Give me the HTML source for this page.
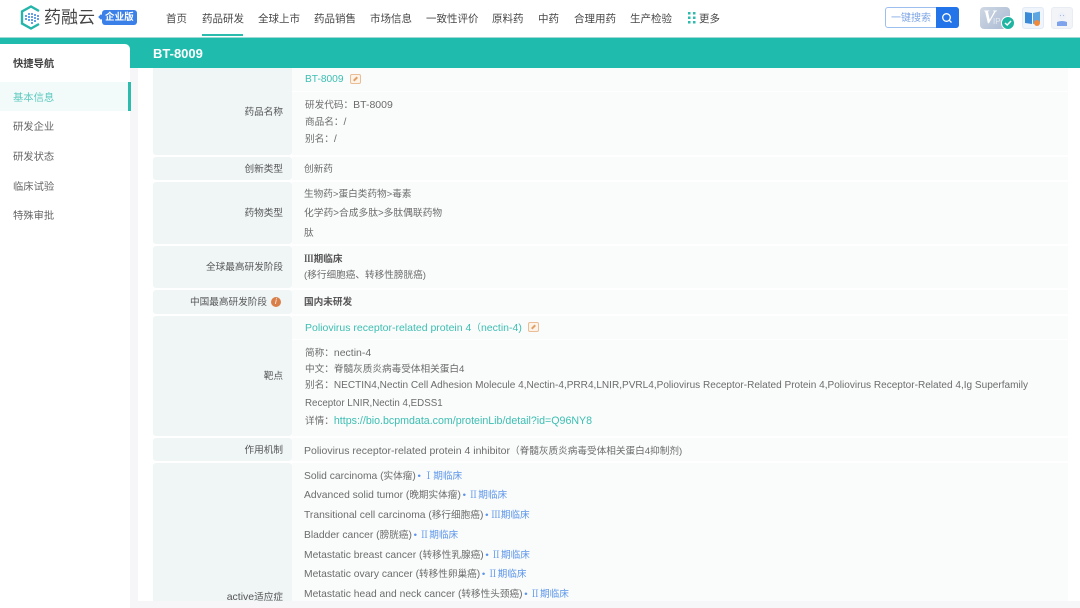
<!DOCTYPE html>
<html lang="zh"><head><meta charset="utf-8"><title>BT-8009</title>
<style>
html,body{margin:0;padding:0}
body{width:1080px;height:608px;overflow:hidden;position:relative;background:#fff;font-family:"Liberation Sans","Noto Sans CJK SC",sans-serif;font-size:9.65px;color:#6c6c6c}
#w{position:absolute;inset:0;filter:blur(.3px)}
.a,.t{position:absolute}
.t{white-space:nowrap;line-height:14px}
u{text-decoration:none;font-size:10.5px}
.m u{font-size:10.3px}
.n{font-size:10.5px;color:#484848;top:12px}
.s{font-size:10.3px;color:#666;left:13px}
.l{right:797px;text-align:right;color:#555}
.b{font-weight:bold;color:#555}
.g{color:#3cbfb2}
.p{color:#5b95ea;margin-left:-1px}
em{font-style:normal;font-family:"Noto Serif CJK SC",serif}
.e{width:11px;height:10px;border:1px solid #e9bd95;border-radius:2px;background:#fdf3e8;box-sizing:border-box}
.e:after{content:"";position:absolute;left:2px;top:3px;width:5px;height:2px;background:#e0a068;transform:rotate(-45deg)}
</style></head><body><div id="w">
<div class="a" style="left:0;top:0;width:1080px;height:37px;background:#fff"></div>
<svg class="a" style="left:19px;top:4px" width="26" height="28" viewBox="0 0 26 28"><path d="M20 7 L12 2.500 L3 7.500 V19.500 L12 24.500 L20 20" fill="none" stroke="#25b5aa" stroke-width="2.400"/><path d="M7 11v6M10 9v9M13 9v11M16 10v8M19 11v5" stroke="#4a8fe0" stroke-width="1.700" stroke-dasharray="2 1"/></svg>
<div class="t" style="left:44px;top:5px;font-size:17px;line-height:26px;color:#444">药融云</div>
<div class="a" style="left:102px;top:10px;width:35px;height:15px;background:#3b80e8;border-radius:3px"></div>
<div class="a" style="left:99px;top:15px;width:4px;height:4px;background:#3b80e8;transform:rotate(45deg)"></div>
<div class="t" style="left:105px;top:11px;font-size:9.6px;color:#fff;font-weight:bold">企业版</div>
<div class="t n" style="left:166px">首页</div>
<div class="t n" style="left:202px">药品研发</div>
<div class="t n" style="left:258px">全球上市</div>
<div class="t n" style="left:314px">药品销售</div>
<div class="t n" style="left:370px">市场信息</div>
<div class="t n" style="left:426px">一致性评价</div>
<div class="t n" style="left:492px">原料药</div>
<div class="t n" style="left:538px">中药</div>
<div class="t n" style="left:574px">合理用药</div>
<div class="t n" style="left:630px">生产检验</div>
<svg class="a" style="left:687px;top:11px" width="10" height="14"><g fill="#2bbcae"><rect x="1" y="1" width="2.500" height="2.500"/><rect x="6" y="1" width="2.500" height="2.500"/><rect x="1" y="5.500" width="2.500" height="2.500"/><rect x="6" y="5.500" width="2.500" height="2.500"/><rect x="1" y="10" width="2.500" height="2.500"/><rect x="6" y="10" width="2.500" height="2.500"/></g></svg>
<div class="t n" style="left:699px">更多</div>
<div class="a" style="left:202px;top:34px;width:41px;height:2px;background:#2bbcae"></div>
<div class="a" style="left:885px;top:7px;width:74px;height:21px;border:1px solid #9dbff0;border-radius:3px;box-sizing:border-box;background:#fff"></div>
<div class="t" style="left:891px;top:12px;font-size:10px;color:#7ea6e6">一键搜索</div>
<div class="a" style="left:936px;top:7px;width:23px;height:21px;background:#2274e8;border-radius:0 3px 3px 0"></div>
<svg class="a" style="left:940px;top:11px" width="14" height="14" fill="none" stroke="#fff" stroke-width="1.300"><circle cx="6.500" cy="6.500" r="3.800"/><path d="M9.300 9.300 L11.500 11.500"/></svg>
<div class="a" style="left:980px;top:7px;width:30px;height:22px;background:linear-gradient(135deg,#cfd8e4,#a9b9d2);border-radius:4px"></div>
<div class="t" style="left:983px;top:7px;font:italic bold 19px/22px 'Liberation Serif',serif;color:#fff">V</div>
<div class="t" style="left:993px;top:15px;font-size:8px;color:#e4eaf2">IP</div>
<div class="a" style="left:1001px;top:16px;width:14px;height:14px;background:#1fb5a3;border-radius:50%;border:1px solid #fff;box-sizing:border-box"></div>
<svg class="a" style="left:1002px;top:17px" width="12" height="12" fill="none" stroke="#fff" stroke-width="1.500"><path d="M3 6 L5.200 8 L9 4"/></svg>
<div class="a" style="left:1022px;top:7px;width:22px;height:22px;background:#f0f5fc;border:1px solid #e2eaf5;border-radius:3px;box-sizing:border-box"></div>
<svg class="a" style="left:1024px;top:10px" width="18" height="17"><path d="M1 2 L8 3 V14 L1 13 Z" fill="#3b8ad8"/><path d="M9 3 L16 1.500 V12 L9 14 Z" fill="#5ea6e2"/><circle cx="13" cy="13" r="3" fill="#ee8a3a"/></svg>
<div class="a" style="left:1051px;top:7px;width:22px;height:22px;background:#f2f4f8;border:1px solid #e9edf3;border-radius:3px;box-sizing:border-box"></div>
<svg class="a" style="left:1054px;top:10px" width="16" height="17"><circle cx="8" cy="6" r="4" fill="#eef1f8"/><circle cx="6.500" cy="5.500" r=".6" fill="#a9bbdc"/><circle cx="9.500" cy="5.500" r=".6" fill="#a9bbdc"/><path d="M3 12 Q8 10 13 12 V16 H3 Z" fill="#7ea3ec"/></svg>

<div class="a" style="left:0;top:37px;width:1080px;height:31px;background:#1fbcad;border-top:1px solid #9fd9d3;box-sizing:border-box"></div>
<div class="t" style="left:153px;top:47px;font-size:13px;font-weight:bold;color:#fff">BT-8009</div>
<div class="a" style="left:130px;top:68px;width:8px;height:540px;background:#f6f6f8"></div>
<div class="a" style="left:0;top:44px;width:130px;height:564px;background:#fff;border-radius:0 5px 0 0"></div>
<div class="t s" style="top:58px;font-weight:bold;color:#444">快捷导航</div>
<div class="a" style="left:0;top:82px;width:131px;height:29px;background:#f3fbfa"></div>
<div class="a" style="left:128px;top:82px;width:3px;height:29px;background:#2bbcae"></div>
<div class="t s" style="top:92px;color:#5cc9be">基本信息</div>
<div class="t s" style="top:121px">研发企业</div>
<div class="t s" style="top:151px">研发状态</div>
<div class="t s" style="top:181px">临床试验</div>
<div class="t s" style="top:210px">特殊审批</div>

<div class="a" style="left:153px;top:68px;width:139px;height:87px;background:#f0f6f6;border-radius:0 0 3px 3px"></div><div class="a" style="left:292px;top:68px;width:776px;height:87px;background:#fafbfb"></div>
<div class="a" style="left:292px;top:91px;width:776px;height:1px;background:#fff"></div>
<div class="a" style="left:153px;top:157px;width:139px;height:23px;background:#f0f6f6;border-radius:3px"></div><div class="a" style="left:292px;top:157px;width:776px;height:23px;background:#fafbfb"></div>
<div class="a" style="left:153px;top:182px;width:139px;height:62px;background:#f0f6f6;border-radius:3px"></div><div class="a" style="left:292px;top:182px;width:776px;height:62px;background:#fafbfb"></div>
<div class="a" style="left:153px;top:246px;width:139px;height:42px;background:#f0f6f6;border-radius:3px"></div><div class="a" style="left:292px;top:246px;width:776px;height:42px;background:#fafbfb"></div>
<div class="a" style="left:153px;top:290px;width:139px;height:24px;background:#f0f6f6;border-radius:3px"></div><div class="a" style="left:292px;top:290px;width:776px;height:24px;background:#fafbfb"></div>
<div class="a" style="left:153px;top:316px;width:139px;height:120px;background:#f0f6f6;border-radius:3px"></div><div class="a" style="left:292px;top:316px;width:776px;height:120px;background:#fafbfb"></div>
<div class="a" style="left:292px;top:339px;width:776px;height:1px;background:#fff"></div>
<div class="a" style="left:153px;top:438px;width:139px;height:23px;background:#f0f6f6;border-radius:3px"></div><div class="a" style="left:292px;top:438px;width:776px;height:23px;background:#fafbfb"></div>
<div class="a" style="left:153px;top:463px;width:139px;height:138px;background:#f0f6f6;border-radius:3px 3px 0 0"></div><div class="a" style="left:292px;top:463px;width:776px;height:138px;background:#fafbfb"></div>

<div class="t l" style="top:106px">药品名称</div>
<div class="t g" style="left:305px;top:73px;font-size:10.2px">BT-8009</div><div class="a e" style="left:350px;top:74px"></div>
<div class="t" style="left:305px;top:98px">研发代码：<u>BT-8009</u></div>
<div class="t" style="left:305px;top:115px">商品名：<u>/</u></div>
<div class="t" style="left:305px;top:132px">别名：<u>/</u></div>
<div class="t l" style="top:163px">创新类型</div>
<div class="t" style="left:304px;top:163px">创新药</div>
<div class="t l" style="top:207px">药物类型</div>
<div class="t" style="left:304px;top:188px">生物药&gt;蛋白类药物&gt;毒素</div>
<div class="t" style="left:304px;top:207px;font-size:9.75px">化学药&gt;合成多肽&gt;多肽偶联药物</div>
<div class="t" style="left:304px;top:227px">肽</div>
<div class="t l" style="top:261px">全球最高研发阶段</div>
<div class="t b" style="left:304px;top:251px"><em>Ⅲ</em>期临床</div>
<div class="t" style="left:304px;top:269px">(移行细胞癌、转移性膀胱癌)</div>
<div class="t l" style="top:296px;right:813px">中国最高研发阶段</div>
<div class="a" style="left:271px;top:297px;width:10px;height:10px;border-radius:50%;background:#d9804a"></div>
<div class="t" style="left:275px;top:295px;font-size:8px;color:#fff;font-style:italic">i</div>
<div class="t b" style="left:304px;top:296px">国内未研发</div>
<div class="t l" style="top:370px">靶点</div>
<div class="t g" style="left:305px;top:321px"><u>Poliovirus receptor-related protein 4</u>（<u>nectin-4)</u></div><div class="a e" style="left:528px;top:322px"></div>
<div class="t" style="left:305px;top:346px">简称：<u>nectin-4</u></div>
<div class="t" style="left:305px;top:363px">中文：脊髓灰质炎病毒受体相关蛋白4</div>
<div class="t" style="left:305px;top:379px">别名：<u style="font-size:10.05px">NECTIN4,Nectin Cell Adhesion Molecule 4,Nectin-4,PRR4,LNIR,PVRL4,Poliovirus Receptor-Related Protein 4,Poliovirus Receptor-Related 4,Ig Superfamily</u></div>
<div class="t" style="left:305px;top:397px"><u style="font-size:9.75px">Receptor LNIR,Nectin 4,EDSS1</u></div>
<div class="t" style="left:305px;top:414px">详情：<u class="g" style="font-size:10.65px">https://bio.bcpmdata.com/proteinLib/detail?id=Q96NY8</u></div>
<div class="t l" style="top:444px">作用机制</div>
<div class="t" style="left:304px;top:444px"><u>Poliovirus receptor-related protein 4 inhibitor</u>（脊髓灰质炎病毒受体相关蛋白4抑制剂)</div>
<div class="t m" style="left:304px;top:468px"><u>Solid carcinoma (</u>实体瘤<u>)</u> <span class="p">• <em>Ⅰ</em>期临床</span></div>
<div class="t m" style="left:304px;top:487px"><u>Advanced solid tumor (</u>晚期实体瘤<u>)</u> <span class="p">• <em>Ⅱ</em>期临床</span></div>
<div class="t m" style="left:304px;top:507px"><u>Transitional cell carcinoma (</u>移行细胞癌<u>)</u> <span class="p">• <em>Ⅲ</em>期临床</span></div>
<div class="t m" style="left:304px;top:527px"><u>Bladder cancer (</u>膀胱癌<u>)</u> <span class="p">• <em>Ⅱ</em>期临床</span></div>
<div class="t m" style="left:304px;top:547px"><u>Metastatic breast cancer (</u>转移性乳腺癌<u>)</u> <span class="p">• <em>Ⅱ</em>期临床</span></div>
<div class="t m" style="left:304px;top:566px"><u>Metastatic ovary cancer (</u>转移性卵巢癌<u>)</u> <span class="p">• <em>Ⅱ</em>期临床</span></div>
<div class="t m" style="left:304px;top:586px"><u>Metastatic head and neck cancer (</u>转移性头颈癌<u>)</u> <span class="p">• <em>Ⅱ</em>期临床</span></div>
<div class="t l" style="top:590px"><u>active</u>适应症</div>
<div class="a" style="left:130px;top:601px;width:950px;height:7px;background:#f6f6f8"></div>
</div></body></html>
